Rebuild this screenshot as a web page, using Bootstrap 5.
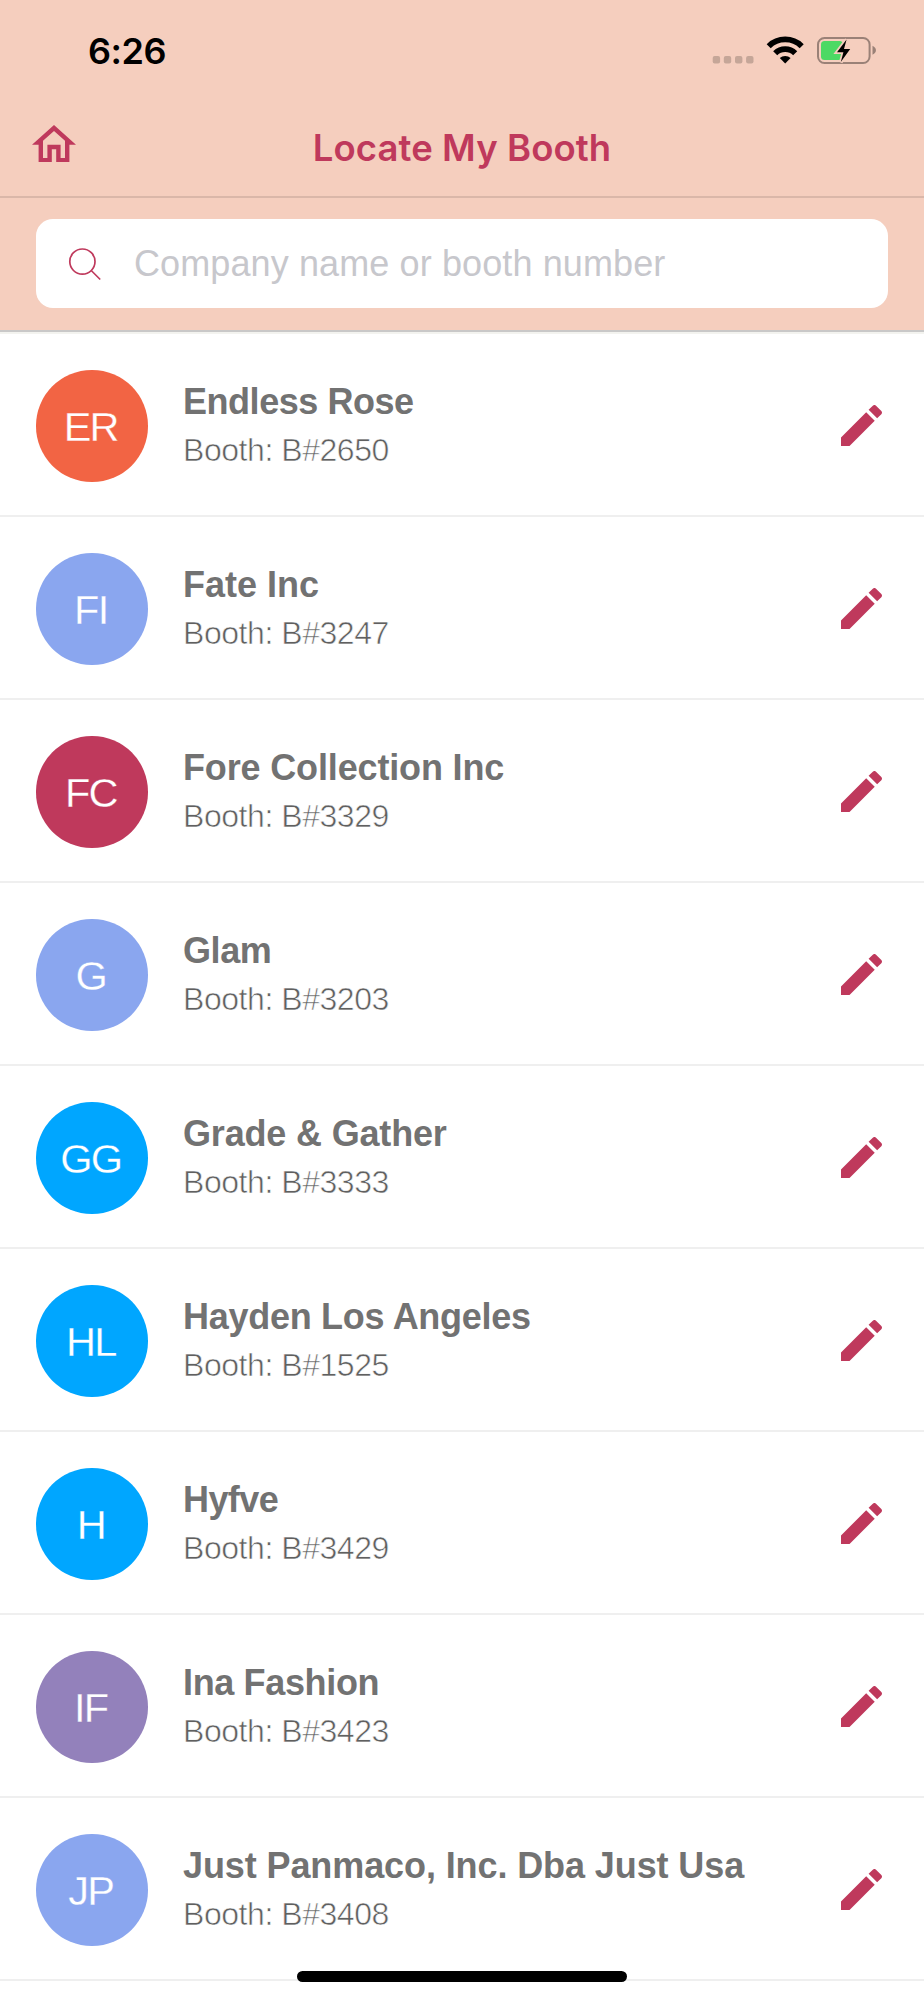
<!DOCTYPE html>
<html lang="en">
<head>
<meta charset="utf-8">
<meta name="viewport" content="width=device-width, initial-scale=1">
<title>Locate My Booth</title>
<link href="https://cdn.jsdelivr.net/npm/bootstrap@5.3.0/dist/css/bootstrap.min.css" rel="stylesheet">
<style>
  :root { --peach: #f5cebe; --brand: #bf395c; }
  body { font-family: "Liberation Sans", Arial, sans-serif; background: #fff; height: 2000px; overflow: hidden; }
  .app-top { background: var(--peach); }
  .status-row { height: 100px; padding: 0 46px 0 88px; }
  .clock { font: 600 36px/100px Inter, sans-serif; letter-spacing: -.5px; color: #000; padding-top: 1px; }
  .title-row { height: 98px; border-bottom: 2px solid #dab7a9; padding: 0 32px; display: grid; grid-template-columns: 44px 1fr 44px; }
  .home-link { padding-top: 25px; line-height: 0; }
  .page-title { font: 600 36.5px/96px Inter, sans-serif; letter-spacing: .08px; color: var(--brand); white-space: nowrap; }
  .search-row { height: 134px; padding: 21px 36px 0; border-bottom: 2px solid #c9c8c8; }
  .search-box { height: 89px; border-radius: 17px; padding-left: 32px; }
  .search-field { font-size: 36px; letter-spacing: .11px; color: #212529; padding: 0; margin-left: 32px; }
  .search-field::placeholder { color: #c7c7cc; opacity: 1; }
  .list-lip { height: 2px; background: #f3f3ef; }
  .booth-item { height: 183px; padding: 36px 42px 0 36px; border-bottom: 2px solid #efefef; }
  .avatar { width: 111.5px; height: 111.5px; font-size: 41.5px; line-height: 1; color: #fff; letter-spacing: -1.8px; padding: 1px 2px 0 0; -webkit-text-stroke: .3px var(--tone); background: var(--tone); }
  .tone-orange { --tone: #f26444; } .tone-blue { --tone: #8aa6ef; } .tone-berry { --tone: #bf395c; }
  .tone-sky { --tone: #00a6ff; } .tone-violet { --tone: #9381bb; }
  .booth-text { margin-left: 35.5px; padding-top: 10px; white-space: nowrap; }
  .company { font-size: 36px; line-height: 44px; font-weight: 700; color: #727272; }
  .booth-no { font-size: 32px; line-height: 40px; margin-top: 6px; color: #606060; letter-spacing: -.45px; -webkit-text-stroke: .6px #fff; }
  .pencil { width: 41px; height: 41px; margin-top: 35px; color: var(--brand); }
  .home-bar { width: 330px; height: 11px; background: #000; bottom: 18px; left: 297px; }
</style>
</head>
<body>
<svg class="d-none" aria-hidden="true">
  <symbol id="pencil" viewBox="3 3 18 18"><path fill="currentColor" d="M20.71 7.04c.39-.39.39-1.04 0-1.41l-2.34-2.34c-.37-.39-1.02-.39-1.41 0l-1.84 1.83 3.75 3.75M3 17.25V21h3.75L17.81 9.93l-3.75-3.75L3 17.25z"/></symbol>
</svg>

<header class="app-top">
  <div class="status-row d-flex justify-content-between">
    <div class="clock">6:26</div>
    <svg width="166" height="100" viewBox="712 0 166 100" aria-hidden="true">
      <g fill="#c5a698">
        <rect x="712.7" y="56" width="7.4" height="7.4" rx="2"/><rect x="723.8" y="56" width="7.4" height="7.4" rx="2"/>
        <rect x="735" y="56" width="7.4" height="7.4" rx="2"/><rect x="746.1" y="56" width="7.4" height="7.4" rx="2"/>
      </g>
      <path fill="none" stroke="#000" stroke-width="5.8" d="M768.700 46.200a23.600 23.600 0 0 1 33 0M775.200 53.200a14.200 14.200 0 0 1 20 0"/>
      <path d="M785.200 63.500l-5.400-5.400a7.800 7.800 0 0 1 10.800 0z"/>
      <rect x="818" y="38" width="51.600" height="25" rx="6.500" fill="none" stroke="#9a8177" stroke-width="2"/>
      <path fill="#9a8177" d="M872.500 45.800c4.600 2 4.600 7 0 9z"/>
      <rect x="821" y="41" width="22" height="19" rx="3.500" fill="#4cd964"/>
      <path fill="#000" stroke="#f5cebe" stroke-width="3.600" paint-order="stroke" d="M846.600 39.500L837 52.300h6.400l-2.600 9.800 9.400-13.200h-6.200z"/>
    </svg>
  </div>
  <div class="title-row">
    <a class="home-link" href="#" aria-label="Home">
      <svg width="44" height="37.400" viewBox="2 3 20 17"><path fill="#bf395c" d="M12 5.690l5 4.500V18h-2v-6H9v6H7v-7.810l5-4.500M12 3L2 12h3v8h6v-6h2v6h6v-8h3L12 3z"/></svg>
    </a>
    <h1 class="page-title m-0 text-center">Locate My Booth</h1>
  </div>
  <div class="search-row">
    <div class="search-box bg-white d-flex align-items-center">
      <svg class="flex-shrink-0" width="34" height="34" viewBox="0 0 34 34" fill="none" stroke="#bf395c" stroke-width="1.700"><circle cx="14.400" cy="14.600" r="12.600"/><path d="M23.200 23.500l9 9"/></svg>
      <input class="search-field form-control border-0 bg-transparent shadow-none" type="text" placeholder="Company name or booth number">
    </div>
  </div>
</header>
<div class="list-lip"></div>

<main id="booths"></main>
<div class="home-bar position-fixed rounded-pill"></div>

<script>
  // initials, tone, company, booth number, name tracking in px
  const booths = [
    ["ER", "orange", "Endless Rose", "2650", -.46],
    ["FI", "blue", "Fate Inc", "3247", -.02],
    ["FC", "berry", "Fore Collection Inc", "3329", -.15],
    ["G", "blue", "Glam", "3203", -.4],
    ["GG", "sky", "Grade &amp; Gather", "3333", -.17],
    ["HL", "sky", "Hayden Los Angeles", "1525", -.28],
    ["H", "sky", "Hyfve", "3429", -.6],
    ["IF", "violet", "Ina Fashion", "3423", -.35],
    ["JP", "blue", "Just Panmaco, Inc. Dba Just Usa", "3408", -.1]
  ];
  document.getElementById("booths").innerHTML = booths.map(([initials, tone, name, no, tracking]) => `
    <div class="booth-item d-flex align-items-start">
      <div class="avatar tone-${tone} rounded-circle d-flex align-items-center justify-content-center flex-shrink-0">${initials}</div>
      <div class="booth-text flex-grow-1">
        <div class="company" style="letter-spacing:${tracking}px">${name}</div>
        <div class="booth-no">Booth: B#${no}</div>
      </div>
      <svg class="pencil flex-shrink-0"><use href="#pencil"/></svg>
    </div>`).join("");
</script>
<script src="https://cdn.jsdelivr.net/npm/bootstrap@5.3.0/dist/js/bootstrap.bundle.min.js"></script>
</body>
</html>
